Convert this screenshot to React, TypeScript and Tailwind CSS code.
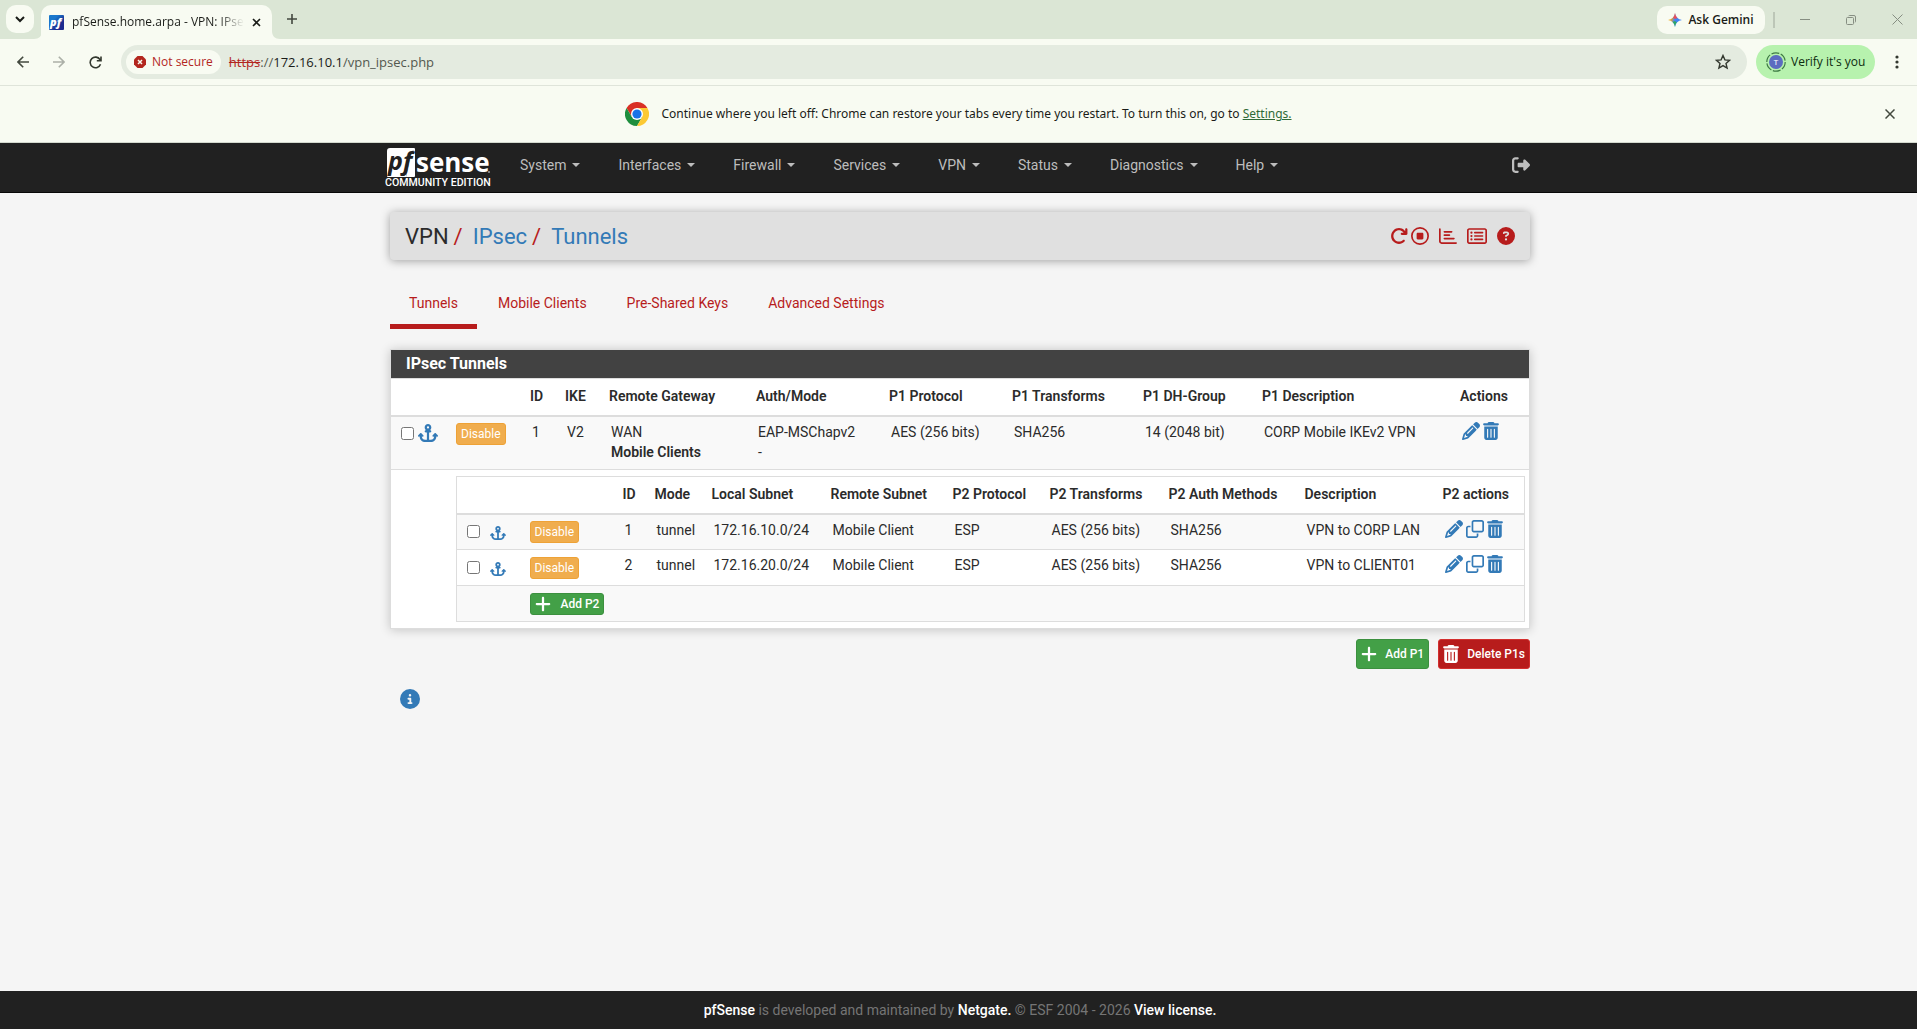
import { useState } from "react";
import type { ReactNode } from "react";
import {
  FaAnchor,
  FaArrowRotateRight,
  FaCircleInfo,
  FaCircleQuestion,
  FaPencil,
  FaPlus,
  FaRegChartBar,
  FaRegCircleStop,
  FaRegClone,
  FaRegRectangleList,
  FaRightFromBracket,
  FaTrashCan,
} from "react-icons/fa6";

const menus = ["System", "Interfaces", "Firewall", "Services", "VPN", "Status", "Diagnostics", "Help"];
const tabs = ["Tunnels", "Mobile Clients", "Pre-Shared Keys", "Advanced Settings"];

const phase2 = [
  { id: 1, mode: "tunnel", local: "172.16.10.0/24", remote: "Mobile Client", protocol: "ESP", transforms: "AES (256 bits)", auth: "SHA256", descr: "VPN to CORP LAN" },
  { id: 2, mode: "tunnel", local: "172.16.20.0/24", remote: "Mobile Client", protocol: "ESP", transforms: "AES (256 bits)", auth: "SHA256", descr: "VPN to CLIENT01" },
];

/* ---------- Browser chrome ---------- */

function TabStrip() {
  return (
    <div className="flex h-[39px] items-end bg-[#dbe6d5]">
      <button aria-label="Search tabs" className="mb-[6px] ml-[6px] flex h-7 w-7 items-center justify-center rounded-[10px] bg-[#f8fbf2]">
        <svg width="10" height="7" viewBox="0 0 10 7" fill="none" stroke="#1a1c18" strokeWidth="2">
          <path d="M1 1l4 4 4-4" />
        </svg>
      </button>
      <svg width="8" height="8" viewBox="0 0 8 8" className="-mr-px" fill="#f8fbf2">
        <path d="M8 0v8H0c5 0 8-3 8-8z" />
      </svg>
      <div className="flex h-[34px] w-[231px] items-center rounded-t-[10px] bg-[#f8fbf2] pl-2">
        <svg width="15" height="15" viewBox="0 0 15 15" className="shrink-0">
          <defs>
            <linearGradient id="fav" x1="0" y1="0" x2="1" y2="1">
              <stop offset="0.3" stopColor="#1a78cc" />
              <stop offset="0.7" stopColor="#1d2a8e" />
            </linearGradient>
          </defs>
          <rect width="15" height="15" rx="1" fill="url(#fav)" />
          <text x="1" y="11" fontFamily="Open Sans, sans-serif" fontSize="11" fontStyle="italic" fontWeight="800" fill="#fff">pf</text>
        </svg>
        <span className="ml-2 w-[172px] overflow-hidden whitespace-nowrap bg-gradient-to-r from-[#1a1c18] from-85% to-transparent bg-clip-text text-xs text-transparent">
          pfSense.home.arpa - VPN: IPsec
        </span>
        <button aria-label="Close tab" className="ml-2">
          <svg width="9" height="9" viewBox="0 0 9 9" stroke="#1a1c18" strokeWidth="1.6">
            <path d="M1 1l7 7M8 1l-7 7" />
          </svg>
        </button>
      </div>
      <svg width="8" height="8" viewBox="0 0 8 8" fill="#f8fbf2">
        <path d="M0 0v8h8C3 8 0 5 0 0z" />
      </svg>
      <button aria-label="New tab" className="mb-[15px] ml-[7px]">
        <svg width="10" height="10" viewBox="0 0 10 10" stroke="#43483f" strokeWidth="1.6">
          <path d="M5 0v10M0 5h10" />
        </svg>
      </button>

      <div className="ml-auto flex h-full items-center">
        <button className="flex h-7 w-[108px] items-center justify-center gap-[6px] rounded-[10px] bg-[#f8fbf2] text-xs font-semibold text-[#1a1c18]">
          <svg width="14" height="14" viewBox="0 0 14 14">
            <defs>
              <linearGradient id="gem" x1="0" y1="0.3" x2="1" y2="0.6">
                <stop offset="0" stopColor="#fbbc04" />
                <stop offset="0.25" stopColor="#e8a033" />
                <stop offset="0.5" stopColor="#4285f4" />
                <stop offset="1" stopColor="#3b82f6" />
              </linearGradient>
            </defs>
            <path d="M7 0c.6 4 3 6.400 7 7-4 .6-6.400 3-7 7-.6-4-3-6.400-7-7 4-.6 6.400-3 7-7z" fill="url(#gem)" />
            <path d="M7 0c.4 2.500 1.200 3.900 2.500 5L7 6 5 4.500C6.200 3.500 6.700 2 7 0z" fill="#ea4d5c" />
            <path d="M7 14c-.4-2.500-1.200-4-2.600-5L7 8l1.800 1.500C7.700 10.500 7.300 12 7 14z" fill="#2fa862" />
          </svg>
          Ask Gemini
        </button>
        <span className="ml-2 h-4 w-[2px] bg-[#bcc6b7]" />
        <button aria-label="Minimize" className="ml-[25px]">
          <svg width="10" height="10" viewBox="0 0 10 10" stroke="#868e82">
            <path d="M0 4.500h10" />
          </svg>
        </button>
        <button aria-label="Restore" className="ml-9">
          <svg width="10" height="10" viewBox="0 0 10 10" fill="none" stroke="#868e82">
            <rect x="0.500" y="2.500" width="7" height="7" rx="1" />
            <path d="M2.500 1.200q.3-.7 1-.7H8q1.500 0 1.500 1.500v4.500q0 .7-.7 1" />
          </svg>
        </button>
        <button aria-label="Close" className="ml-9 mr-[14px]">
          <svg width="11" height="11" viewBox="0 0 11 11" stroke="#868e82">
            <path d="M.5 .5l10 10M10.500 .5l-10 10" />
          </svg>
        </button>
      </div>
    </div>
  );
}

function Toolbar() {
  return (
    <div className="flex h-[47px] items-center border-b border-[#dfe4da] bg-[#f8fbf2] text-[#42493f]">
      <button aria-label="Back" className="ml-[17px]">
        <svg width="12" height="12" viewBox="0 0 12 12" fill="none" stroke="#43493f" strokeWidth="1.600">
          <path d="M12 6H1.200M6.200 .8L1 6l5.200 5.200" />
        </svg>
      </button>
      <button aria-label="Forward" className="ml-6">
        <svg width="12" height="12" viewBox="0 0 12 12" fill="none" stroke="#acb0a8" strokeWidth="1.600">
          <path d="M0 6h10.800M5.800 .8L11 6l-5.200 5.200" />
        </svg>
      </button>
      <button aria-label="Reload" className="ml-6">
        <svg width="13" height="13" viewBox="0 0 13 13" fill="none" stroke="#33382f" strokeWidth="1.600">
          <path d="M11.500 8.200A5.300 5.300 0 1 1 11 3.600M12 .5v4.300H7.800" />
        </svg>
      </button>
      <div className="ml-[19px] flex h-[34px] grow items-center rounded-full bg-[#e4ebe0] pl-[5px] pr-4">
        <button className="flex h-6 items-center gap-[6px] rounded-full bg-[#f8fbf2] px-2 text-xs font-medium text-[#b3261e]">
          <svg width="12" height="12" viewBox="0 0 12 12">
            <path d="M3.500 0h5L12 3.500v5L8.500 12h-5L0 8.500v-5z" fill="#b3261e" />
            <path d="M4 4l4 4M8 4l-4 4" stroke="#f8fbf2" strokeWidth="1.500" />
          </svg>
          Not secure
        </button>
        <span className="ml-2 text-[13px] text-[#53594f]">
          <span className="text-[#b3261e] line-through">https</span>://
          <span className="text-[#1a1c18]">172.16.10.1</span>/vpn_ipsec.php
        </span>
        <button aria-label="Bookmark this tab" className="ml-auto">
          <svg width="16" height="16" viewBox="0 0 16 16" fill="none" stroke="#33382f" strokeWidth="1.400">
            <path d="M8 1.500l1.900 4.400 4.700.4-3.600 3.100 1.100 4.700L8 11.600l-4.100 2.500L5 9.400 1.400 6.300l4.700-.4z" />
          </svg>
        </button>
      </div>
      <button className="ml-[9px] flex h-[34px] w-[119px] items-center gap-[5px] rounded-full bg-[#b7f2ae] pl-[10px] text-xs text-[#0c2c10]">
        <svg width="20" height="20" viewBox="0 0 20 20" className="shrink-0">
          <circle cx="10" cy="10" r="9.200" fill="none" stroke="#3d7a43" strokeWidth="1.200" strokeDasharray="8 1.600" />
          <circle cx="10" cy="10" r="7" fill="#5c6bc0" />
          <text x="10" y="13" textAnchor="middle" fontFamily="Roboto, sans-serif" fontSize="8" fill="#fff">T</text>
        </svg>
        <span className="whitespace-nowrap">Verify it's you</span>
      </button>
      <button aria-label="Menu" className="ml-5 mr-[18px]">
        <svg width="4" height="14" viewBox="0 0 4 14" fill="#33382f">
          <circle cx="2" cy="2" r="1.600" />
          <circle cx="2" cy="7" r="1.600" />
          <circle cx="2" cy="12" r="1.600" />
        </svg>
      </button>
    </div>
  );
}

function RestoreBar() {
  return (
    <div className="flex h-[57px] items-center border-b border-[#d3d9ce] bg-[#f8fbf2] text-xs text-[#1a1c18]">
      <div className="flex grow items-center justify-center pl-8">
        <svg width="24" height="24" viewBox="0 0 24 24" className="mr-3">
          <path d="M1.600 6A12 12 0 0 1 22.400 6H12L6.800 15z" fill="#d93025" />
          <path d="M1.600 6A12 12 0 0 0 12 24l5.200-9L6.800 15z" fill="#1e8e3e" />
          <path d="M22.400 6A12 12 0 0 1 12 24l5.200-9L12 6z" fill="#fcc934" />
          <circle cx="12" cy="12" r="6" fill="#fff" />
          <circle cx="12" cy="12" r="4.600" fill="#1a73e8" />
        </svg>
        <p className="font-['Noto_Sans',sans-serif]">
          Continue where you left off: Chrome can restore your tabs every time you restart. To turn this on, go to{" "}
          <a href="#settings" className="text-[#2f6a38] underline">Settings.</a>
        </p>
      </div>
      <button aria-label="Dismiss" className="mr-[22px]">
        <svg width="10" height="10" viewBox="0 0 10 10" stroke="#43493f" strokeWidth="1.500">
          <path d="M.5 .5l9 9M9.500 .5l-9 9" />
        </svg>
      </button>
    </div>
  );
}

/* ---------- pfSense ---------- */

function Logo() {
  return (
    <a href="#home" aria-label="pfSense" className="block w-[116px]">
      <svg width="110" height="46" viewBox="0 0 110 46">
        <path d="M5 1h24q1 0 1 1v1q-3 0-4 3l-5 24H3q-1 0-1-1V4q0-3 3-3z" fill="#fff" />
        <path d="M21 30L26 6q1-3 4-3v26q0 1-1 1z" fill="#fff" />
        <text x="3" y="23" fontFamily="Open Sans, sans-serif" fontSize="25" fontStyle="italic" fontWeight="700" fill="#212121">pf</text>
        <text x="31" y="25" fontFamily="Open Sans, sans-serif" fontSize="26" fontWeight="700" fill="#fff">sense</text>
        <circle cx="104" cy="25" r="1" fill="#9e9e9e" />
        <text x="0" y="39" fontFamily="Roboto, sans-serif" fontSize="10.600" fontWeight="500" fill="#fff">COMMUNITY EDITION</text>
      </svg>
    </a>
  );
}

function NavBar() {
  return (
    <nav className="h-[50px] border-b border-[#080808] bg-[#212121] pl-[3px]">
      <div className="mx-auto flex h-full max-w-[1150px] items-center pr-[5px]">
        <div className="mt-1">
          <Logo />
        </div>
        <ul className="flex grow pb-[5px]">
          {menus.map((menu) => (
            <li key={menu}>
              <a href={"#" + menu} className="flex items-center gap-[6px] px-[19px] text-sm text-[#bdbdbd]">
                {menu}
                <span className="h-0 w-0 border-x-4 border-t-4 border-x-transparent border-t-[#bdbdbd]" />
              </a>
            </li>
          ))}
        </ul>
        <a href="#logout" aria-label="Logout" className="pb-[5px] text-[#bdbdbd]">
          <FaRightFromBracket className="h-[18px] w-auto" />
        </a>
      </div>
    </nav>
  );
}

function PageHeader() {
  return (
    <header className="flex h-12 items-center rounded-[4px] bg-[#e0e0e0] px-[15px] shadow-[0_1px_10px_rgba(0,0,0,0.35)]">
      <ol className="flex pt-px text-[22px]">
        <li>VPN</li>
        <li className="flex">
          <span className="px-[5px] text-[#b71c1c]">/</span>
          <a href="#ipsec" className="pl-[5px] text-[#337ab7]">IPsec</a>
        </li>
        <li className="flex">
          <span className="px-[5px] text-[#b71c1c]">/</span>
          <a href="#tunnels" className="pl-[5px] text-[#337ab7]">Tunnels</a>
        </li>
      </ol>
      <div className="ml-auto flex items-center text-[#b71c1c]">
        <a href="#restart" aria-label="Restart service"><FaArrowRotateRight className="h-[18px] w-auto" /></a>
        <a href="#stop" aria-label="Stop service" className="ml-[3px]"><FaRegCircleStop className="h-[18px] w-auto" /></a>
        <a href="#status" aria-label="Related status" className="ml-[10px]"><FaRegChartBar className="h-[18px] w-auto" /></a>
        <a href="#log" aria-label="Related log entries" className="ml-[10px]">
          <FaRegRectangleList className="h-[18px] w-5" preserveAspectRatio="none" />
        </a>
        <a href="#help" aria-label="Help" className="ml-[10px]"><FaCircleQuestion className="h-[18px] w-auto" /></a>
      </div>
    </header>
  );
}

function DisableButton() {
  return (
    <button className="block h-[22px] rounded-[3px] border border-[#eea236] bg-[#f0ad4e] px-1 text-xs leading-5 text-white">
      Disable
    </button>
  );
}

function Th({ children }: { children?: ReactNode }) {
  return <th className="h-[37px] whitespace-nowrap border-b-2 border-[#ddd] pb-[2px] pl-[5px] text-left font-semibold">{children}</th>;
}

function Td({ children }: { children?: ReactNode }) {
  return <td className="whitespace-nowrap pb-[7px] pl-[7px] pt-[5px] align-top">{children}</td>;
}

function Phase2Table() {
  return (
    <table className="w-full table-fixed border-collapse border border-[#ddd]">
      <colgroup>
        <col className="w-[68px]" />
        <col className="w-[93px]" />
        <col className="w-[32px]" />
        <col className="w-[57px]" />
        <col className="w-[119px]" />
        <col className="w-[122px]" />
        <col className="w-[97px]" />
        <col className="w-[119px]" />
        <col className="w-[136px]" />
        <col className="w-[138px]" />
        <col />
      </colgroup>
      <thead>
        <tr>
          <Th />
          <Th />
          <Th>ID</Th>
          <Th>Mode</Th>
          <Th>Local Subnet</Th>
          <Th>Remote Subnet</Th>
          <Th>P2 Protocol</Th>
          <Th>P2 Transforms</Th>
          <Th>P2 Auth Methods</Th>
          <Th>Description</Th>
          <Th>P2 actions</Th>
        </tr>
      </thead>
      <tbody>
        {phase2.map((p2) => (
          <tr key={p2.id} className="h-9 border-b border-[#ddd] odd:bg-[#f9f9f9]">
            <td className="pl-[10px]">
              <div className="flex items-center gap-[10px]">
                <input type="checkbox" aria-label={"Select phase 2 entry " + p2.id} className="h-[13px] w-[13px]" />
                <button aria-label="Move entry" className="pt-[3px] text-[#337ab7]">
                  <FaAnchor className="h-[14px] w-4" preserveAspectRatio="none" />
                </button>
              </div>
            </td>
            <td className="pl-[5px]"><DisableButton /></td>
            <Td>{p2.id}</Td>
            <Td>{p2.mode}</Td>
            <Td>{p2.local}</Td>
            <Td>{p2.remote}</Td>
            <Td>{p2.protocol}</Td>
            <Td>{p2.transforms}</Td>
            <Td>{p2.auth}</Td>
            <Td>{p2.descr}</Td>
            <Td>
              <div className="flex gap-[3px] text-[#337ab7]">
                <a href="#edit" aria-label="Edit phase 2 entry"><FaPencil className="h-[18px] w-auto" /></a>
                <a href="#copy" aria-label="Copy phase 2 entry"><FaRegClone className="h-[18px] w-auto" /></a>
                <a href="#delete" aria-label="Delete phase 2 entry"><FaTrashCan className="h-[18px] w-4" /></a>
              </div>
            </Td>
          </tr>
        ))}
        <tr className="h-9 bg-[#f9f9f9]">
          <td />
          <td colSpan={10} className="pl-[5px]">
            <button className="flex h-[22px] items-center gap-[10px] rounded-[3px] border border-[#3c903f] bg-[#43a047] px-1 text-xs font-medium text-white">
              <FaPlus className="h-[18px] w-4" />
              Add P2
            </button>
          </td>
        </tr>
      </tbody>
    </table>
  );
}

function TunnelsPanel() {
  return (
    <section className="mt-5 border border-[#ddd] bg-white shadow-[0_1px_10px_rgba(0,0,0,0.2)]">
      <h2 className="border-b border-[#ddd] bg-[#424242] px-[15px] text-base font-bold leading-7 text-white">IPsec Tunnels</h2>
      <table className="w-full table-fixed border-collapse">
        <colgroup>
          <col className="w-[60px]" />
          <col className="w-[74px]" />
          <col className="w-[35px]" />
          <col className="w-[44px]" />
          <col className="w-[147px]" />
          <col className="w-[133px]" />
          <col className="w-[123px]" />
          <col className="w-[131px]" />
          <col className="w-[119px]" />
          <col className="w-[198px]" />
          <col />
        </colgroup>
        <thead>
          <tr>
            <Th />
            <Th />
            <Th>ID</Th>
            <Th>IKE</Th>
            <Th>Remote Gateway</Th>
            <Th>Auth/Mode</Th>
            <Th>P1 Protocol</Th>
            <Th>P1 Transforms</Th>
            <Th>P1 DH-Group</Th>
            <Th>P1 Description</Th>
            <Th>Actions</Th>
          </tr>
        </thead>
        <tbody>
          <tr className="border-b border-[#ddd] bg-[#f9f9f9]">
            <td className="pl-[10px] pt-[7px] align-top">
              <div className="flex items-center gap-1">
                <input type="checkbox" aria-label="Select phase 1 entry 1" className="h-[13px] w-[13px]" />
                <button aria-label="Move entry" className="text-[#337ab7]">
                  <FaAnchor className="h-[18px] w-5" preserveAspectRatio="none" />
                </button>
              </div>
            </td>
            <td className="pl-[5px] pt-[6px] align-top"><DisableButton /></td>
            <Td>1</Td>
            <Td>V2</Td>
            <Td>
              WAN
              <br />
              <b className="font-semibold">Mobile Clients</b>
            </Td>
            <Td>
              EAP-MSChapv2
              <br />-
            </Td>
            <Td>AES (256 bits)</Td>
            <Td>SHA256</Td>
            <Td>14 (2048 bit)</Td>
            <Td>CORP Mobile IKEv2 VPN</Td>
            <Td>
              <div className="flex gap-[3px] text-[#337ab7]">
                <a href="#edit" aria-label="Edit phase 1 entry"><FaPencil className="h-[18px] w-auto" /></a>
                <a href="#delete" aria-label="Delete phase 1 entry"><FaTrashCan className="h-[18px] w-4" /></a>
              </div>
            </Td>
          </tr>
          <tr>
            <td />
            <td colSpan={10} className="py-[6px] pl-[5px] pr-1">
              <Phase2Table />
            </td>
          </tr>
        </tbody>
      </table>
    </section>
  );
}

export default function App() {
  const [active, setActive] = useState("Tunnels");

  return (
    <div className="flex min-h-screen flex-col bg-[#f5f5f5] text-sm text-[#2b2b2b]">
      <div className="font-['Open_Sans',sans-serif]">
        <TabStrip />
        <Toolbar />
        <RestoreBar />
      </div>

      <div className="flex grow flex-col font-[Roboto,sans-serif]">
        <NavBar />
        <main className="grow pl-[3px]">
          <div className="mx-auto max-w-[1140px] pt-[19px]">
            <PageHeader />
            <ul className="mt-[33px] flex gap-[2px]">
              {tabs.map((tab) => (
                <li key={tab}>
                  <button
                    onClick={() => setActive(tab)}
                    className={
                      "border-b-[5px] px-[19px] pb-[11px] text-[#b71c1c] " +
                      (tab === active ? "border-[#b71c1c]" : "border-transparent")
                    }
                  >
                    {tab}
                  </button>
                </li>
              ))}
            </ul>
            <TunnelsPanel />
            <div className="mt-[10px] flex justify-end gap-[9px] text-xs font-medium text-white">
              <button className="flex h-[30px] items-center gap-2 rounded-[3px] border border-[#3c903f] bg-[#43a047] px-1">
                <FaPlus className="h-[18px] w-4" />
                Add P1
              </button>
              <button className="flex h-[30px] items-center gap-2 rounded-[3px] border border-[#d32f2f] bg-[#b71c1c] px-1">
                <FaTrashCan className="h-[18px] w-4" />
                Delete P1s
              </button>
            </div>
            <button aria-label="Show info" className="ml-[10px] mt-5 block text-[#337ab7]">
              <FaCircleInfo className="h-5 w-auto" />
            </button>
          </div>
        </main>
        <footer className="h-[38px] bg-[#212121] pl-[3px] text-center leading-[38px] text-[#757575]">
          <a href="#pfsense" className="font-medium text-white">pfSense</a> is developed and maintained by{" "}
          <a href="#netgate" className="font-medium text-white">Netgate.</a> © ESF 2004 - 2026{" "}
          <a href="#license" className="font-medium text-white">View license.</a>
        </footer>
      </div>
    </div>
  );
}
